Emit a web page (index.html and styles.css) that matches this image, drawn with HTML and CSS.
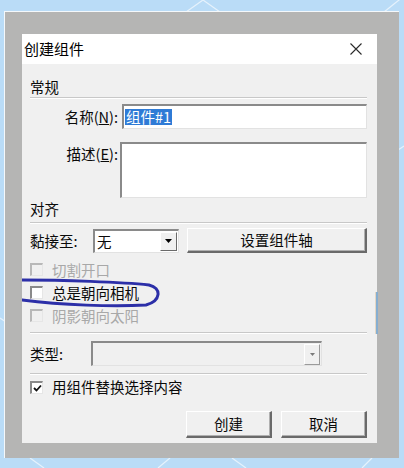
FILE: index.html
```html
<!DOCTYPE html>
<html lang="zh-CN">
<head>
  <meta charset="UTF-8">
  <title>创建组件</title>
  <link rel="stylesheet" href="styles.css">
</head>
<body>

  <div class="desk">
    <!-- faint lines on the desktop behind the window -->
    <svg class="desk-lines" width="404" height="468" viewBox="0 0 404 468">
      <path d="M186 12 L203 0 L220 12" />
      <path d="M384 12 L404 -4" />
      <path d="M0 318 L6 322" />
      <path d="M398 150 L404 146" />
      <path d="M30 458 L44 468" />
      <path d="M170 458 L158 468" />
      <path d="M232 458 L246 468" />
      <path d="M372 458 L362 468" />
    </svg>

    <div class="frame">
      <div class="dialog">

        <div class="titlebar">
          <span class="title">创建组件</span>
          <svg class="close" width="12" height="12" viewBox="0 0 12 12">
            <path d="M0.5 0.5 L11.5 11.5 M11.5 0.5 L0.5 11.5" />
          </svg>
        </div>

        <div class="dialog-body">
          <div class="group-title">常规</div>

          <div class="field field-name">
            <label>名称(<u>N</u>):</label>
            <div class="input"><span class="selected">组件#1</span></div>
          </div>

          <div class="field field-desc">
            <label>描述(<u>E</u>):</label>
            <div class="textarea"></div>
          </div>

          <div class="group-title group-align">对齐</div>

          <div class="glue-row">
            <span class="glue-label">黏接至:</span>
            <div class="combo">
              <span class="combo-text">无</span>
              <span class="combo-btn">
                <svg width="7" height="4" viewBox="0 0 7 4"><path d="M0 0 H7 L3.5 4 Z" /></svg>
              </span>
            </div>
            <button class="btn btn-axis">设置组件轴</button>
          </div>

          <div class="checks">
            <div class="check disabled"><span class="box"></span>切割开口</div>
            <div class="check"><span class="box"></span>总是朝向相机</div>
            <div class="check disabled"><span class="box"></span>阴影朝向太阳</div>
          </div>

          <div class="sep"></div>

          <div class="type-row">
            <span class="type-label">类型:</span>
            <div class="combo combo-off">
              <span class="combo-text"></span>
              <span class="combo-btn">
                <svg width="5" height="3" viewBox="0 0 5 3"><path d="M0 0 H5 L2.5 3 Z" /></svg>
              </span>
            </div>
          </div>

          <div class="sep sep-low"></div>

          <div class="check check-replace">
            <span class="box">
              <svg width="9" height="8" viewBox="0 0 9 8"><path d="M1 4 L3.5 6.5 L8 1.5" /></svg>
            </span>
            用组件替换选择内容
          </div>

          <div class="actions">
            <button class="btn btn-action">创建</button>
            <button class="btn btn-action">取消</button>
          </div>
        </div>

        <!-- pen mark round the option -->
        <svg class="pen-mark" width="150" height="40" viewBox="0 0 150 40">
          <path d="M0 2 C40 2 100 4 127 7 C140 10 139 23 124 27 C90 29 40 27 0 22" />
        </svg>
      </div>
      <span class="edge-glint"></span>
    </div>
  </div>

</body>
</html>
```

FILE: styles.css
```css
body {
  margin: 0;
  font-family: "Noto Sans CJK SC", "Liberation Sans", sans-serif;
  font-size: 14.5px;
  color: #0a0a0a;
}

.desk {
  position: relative;
  width: 404px;
  height: 468px;
  background-color: #badcf7;
  padding: 11px 5px 10px 4px;
  box-sizing: border-box;
}

.desk-lines {
  position: absolute;
  left: 0;
  top: 0;
}

.desk-lines path {
  fill: none;
  stroke: #e6f2fc;
  stroke-width: 1.2;
}

.frame {
  position: relative;
  height: 100%;
  box-sizing: border-box;
  background-color: #b5b5b4;
  border-left: 1px solid #f4f8fb;
  border-top: 1px solid #f4f8fb;
  padding: 22px 22px 15px 17px;
}

.edge-glint {
  position: absolute;
  left: 371px;
  top: 280px;
  width: 2px;
  height: 42px;
  background-color: #86aed0;
  box-shadow: -1px 0 0 #e4d6c4;
}

.dialog {
  position: relative;
  height: 100%;
  background-color: #f0f0f0;
  display: flex;
  flex-direction: column;
}

.titlebar {
  height: 30px;
  background-color: #fff;
  display: flex;
  align-items: center;
  justify-content: space-between;
  padding: 0 15px 0 2px;
}

.title {
  font-size: 15px;
  line-height: 20px;
  color: #000;
}

.close path {
  stroke: #2a2a2a;
  stroke-width: 1.1;
}

.dialog-body {
  padding: 0 10px 0 8px;
  display: flex;
  flex-direction: column;
}

.group-title {
  padding-top: 13px;
  line-height: 20px;
  border-bottom: 1px solid #c8c8c8;
  box-shadow: 0 1px 0 #fff;
}

.group-align {
  padding-top: 1px;
  padding-bottom: 3px;
}

.field {
  display: flex;
}

.field label {
  width: 88px;
  text-align: right;
  line-height: 20px;
}

.field u {
  text-decoration-thickness: 1px;
}

.field-name {
  margin-top: 6px;
  align-items: center;
  gap: 4px;
}

.field-desc {
  margin-top: 13px;
  gap: 2px;
}

.field-desc label {
  padding-top: 2px;
}

.input, .textarea, .combo {
  background-color: #fff;
  border-top: 2px solid #8a8a8a;
  border-left: 2px solid #8a8a8a;
  border-right: 1px solid #e2e2e2;
  border-bottom: 1px solid #e2e2e2;
  box-sizing: border-box;
}

.input {
  flex: 1;
  height: 25px;
  padding: 2px 1px;
  display: flex;
  align-items: center;
}

.selected {
  background-color: #2f7bd6;
  color: #fff;
  line-height: 16px;
  padding: 0 1px;
}

.textarea {
  flex: 1;
  height: 56px;
}

.glue-row {
  margin-top: 5px;
  height: 25px;
  display: flex;
  align-items: center;
}

.glue-label {
  width: 63px;
}

.combo {
  width: 86px;
  height: 24px;
  display: flex;
  align-items: center;
  justify-content: space-between;
  padding: 0 1px 0 2px;
}

.combo-btn {
  width: 17px;
  height: 19px;
  background-color: #f0f0f0;
  border-top: 1px solid #fff;
  border-left: 1px solid #fff;
  border-right: 1px solid #6a6a6a;
  border-bottom: 1px solid #6a6a6a;
  box-sizing: border-box;
  display: flex;
  align-items: center;
  justify-content: center;
}

.combo-btn path {
  fill: #000;
}

.btn {
  font-family: inherit;
  font-size: 14.5px;
  color: #0a0a0a;
  background-color: #f0f0f0;
  border-top: 1px solid #fff;
  border-left: 1px solid #fff;
  border-right: 2px solid #6a6a6a;
  border-bottom: 2px solid #6a6a6a;
  box-shadow: inset -1px -1px 0 #b0b0b0;
  padding: 0;
  line-height: 20px;
}

.btn-axis {
  margin-left: 8px;
  width: 180px;
  height: 25px;
}

.checks {
  margin-top: 5px;
  display: flex;
  flex-direction: column;
}

.check {
  height: 23px;
  display: flex;
  align-items: center;
  gap: 9px;
  line-height: 20px;
}

.check.disabled {
  color: #a8a8a8;
}

.box {
  width: 13px;
  height: 13px;
  box-sizing: border-box;
  background-color: #fff;
  border-top: 2px solid #8a8a8a;
  border-left: 2px solid #8a8a8a;
  border-right: 1px solid #e6e6e6;
  border-bottom: 1px solid #e6e6e6;
  display: flex;
  align-items: center;
  justify-content: center;
}

.check.disabled .box {
  background-color: #f0f0f0;
  border-top-color: #b8b8b8;
  border-left-color: #b8b8b8;
}

.box path {
  fill: none;
  stroke: #111;
  stroke-width: 1.8;
}

.sep {
  margin-top: 5px;
  border-top: 1px solid #c8c8c8;
  box-shadow: 0 1px 0 #fff;
}

.type-row {
  margin-top: 8px;
  height: 25px;
  display: flex;
  align-items: center;
}

.type-label {
  width: 61px;
}

.combo-off {
  width: 231px;
  height: 25px;
  background-color: #f0f0f0;
  justify-content: flex-end;
}

.combo-off .combo-btn {
  width: 16px;
  height: 21px;
  border-right-color: #9a9a9a;
  border-bottom-color: #9a9a9a;
}

.combo-off .combo-btn path {
  fill: #7a7a7a;
}

.sep-low {
  margin-top: 7px;
}

.check-replace {
  height: 24px;
  margin-top: 1px;
}

.actions {
  margin-top: 12px;
  display: flex;
  justify-content: flex-end;
  gap: 9px;
}

.btn-action {
  width: 86px;
  height: 27px;
}

.pen-mark {
  position: absolute;
  left: 0;
  top: 244px;
}

.pen-mark path {
  fill: none;
  stroke: #2c2fa8;
  stroke-width: 3;
  stroke-linecap: round;
}
```
